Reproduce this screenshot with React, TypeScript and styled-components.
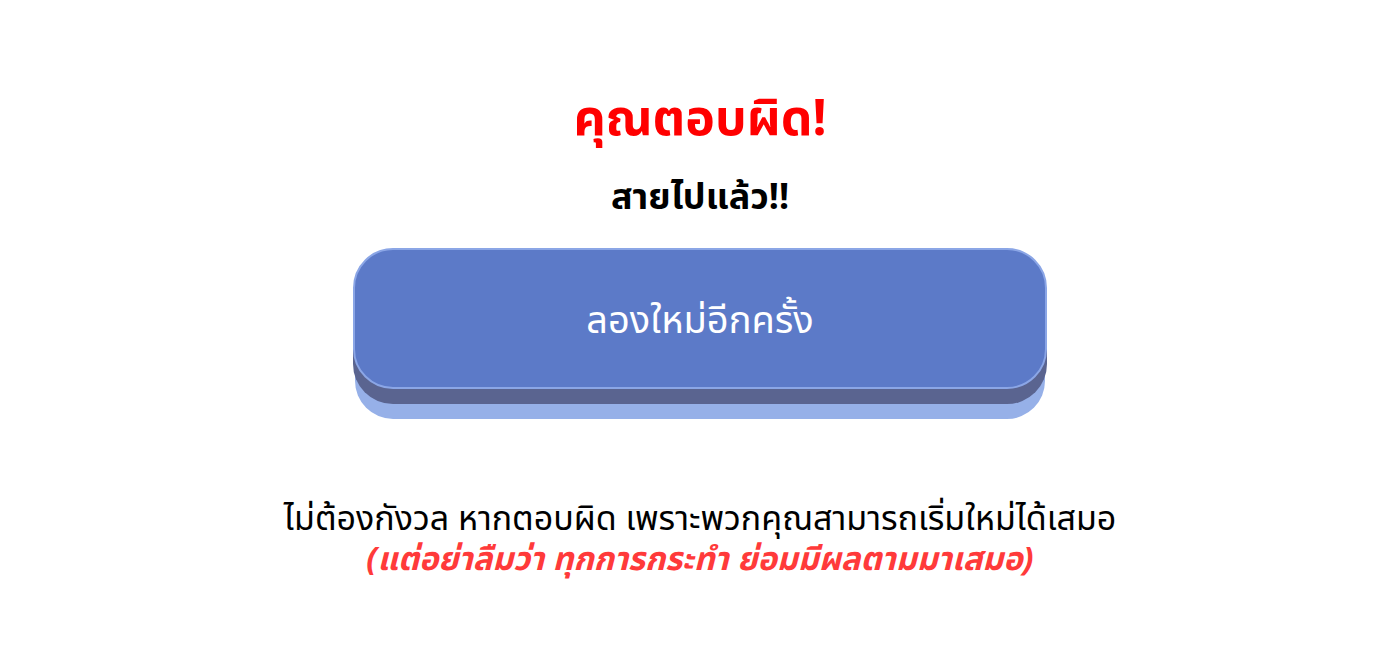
import React from "react";
import styled, { createGlobalStyle } from "styled-components";

const GlobalStyle = createGlobalStyle`
  html, body { margin: 0; padding: 0; background: #ffffff; }
  body { font-family: "Noto Sans", "Noto Sans Thai", sans-serif; }
`;

const Page = styled.main`
  width: 1400px;
  height: 650px;
  display: flex;
  flex-direction: column;
  align-items: center;
  padding-top: 86px;
  box-sizing: border-box;
`;

const Title = styled.h1`
  margin: 0;
  font-size: 50px;
  font-weight: 700;
  color: #ff0000;
  line-height: 60px;
`;

const Subtitle = styled.h2`
  margin: 27px 0 0;
  font-size: 36px;
  font-weight: 700;
  color: #000;
  line-height: 46px;
`;

const RetryButton = styled.button`
  margin-top: 29px;
  width: 694px;
  height: 141px;
  box-sizing: border-box;
  border: 2px solid #8ba6e6;
  border-radius: 40px;
  background: #5c7ac8;
  color: #ffffff;
  font-family: inherit;
  font-size: 38px;
  line-height: 1;
  padding: 0 0 2px;
  cursor: pointer;
  box-shadow: 0 15px 0 0 #5a6490, 0 32px 0 -2px #96b0e8;
`;

const Note = styled.p`
  margin: 110px 0 0;
  font-size: 34px;
  line-height: 36px;
  color: #000;
  text-align: center;
`;

const Warning = styled.p`
  margin: 6px 0 0;
  font-size: 32.5px;
  line-height: 34px;
  font-weight: 700;
  font-style: italic;
  color: #ff3a3a;
  text-align: center;
`;

export default function App() {
  return (
    <>
      <GlobalStyle />
      <Page>
        <Title>คุณตอบผิด!</Title>
        <Subtitle>สายไปแล้ว!!</Subtitle>
        <RetryButton>ลองใหม่อีกครั้ง</RetryButton>
        <Note>ไม่ต้องกังวล หากตอบผิด เพราะพวกคุณสามารถเริ่มใหม่ได้เสมอ</Note>
        <Warning>(แต่อย่าลืมว่า ทุกการกระทำ ย่อมมีผลตามมาเสมอ)</Warning>
      </Page>
    </>
  );
}
